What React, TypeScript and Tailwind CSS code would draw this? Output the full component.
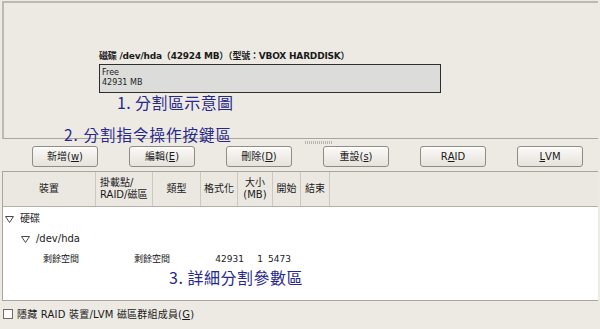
import React from 'react';

const uiFont = { fontFamily: '"DejaVu Sans", "Noto Sans CJK TC", sans-serif' };
const noteFont = { fontFamily: '"Noto Sans CJK TC", sans-serif' };

const Btn: React.FC<{ children: React.ReactNode }> = ({ children }) => (
    <div className="w-[66px] h-[21px] flex items-center justify-center rounded-[3px] border border-[#8f8b85] bg-gradient-to-b from-[#fbfaf8] to-[#e6e2dc] text-[10px] text-[#1a1a1a] shadow-[inset_0_1px_0_#ffffff]">
        {children}
    </div>
);

const Tri: React.FC = () => (
    <svg width="9" height="7" viewBox="0 0 9 7" className="shrink-0">
        <path d="M0.5 0.5 H8.5 L4.5 6.5 Z" fill="#ffffff" stroke="#4a4a4a" strokeWidth="1" />
    </svg>
);

const U: React.FC<{ children: React.ReactNode }> = ({ children }) => <span className="underline underline-offset-1">{children}</span>;

const App: React.FC = () => {
    return (
        <div className="w-[600px] h-[329px] bg-[#edeae4] relative overflow-hidden text-[#1a1a1a]" style={uiFont}>

            {/* Disk map panel */}
            <div className="mt-[1px] mx-[2px] h-[138px] border-t-2 border-l-2 border-b border-[#bdb9b2] border-b-[#a9a59e] pt-[46px] pl-[95px]">
                <p className="text-[9px] font-bold leading-[14px] tracking-[-0.2px]">磁碟 /dev/hda（42924 MB）（型號：VBOX HARDDISK）</p>
                <div className="mt-[1px] w-[342px] h-[29px] border border-[#2e2e2e] bg-[#dcdcdb] pl-[2px] pt-[3px] text-[8px] leading-[10px] text-[#222]">
                    <p>Free</p>
                    <p>42931 MB</p>
                </div>
                <p className="ml-[18px] mt-[0px] text-[16px] leading-[19px] tracking-[0.4px] text-[#28288a]" style={noteFont}>1. 分割區示意圖</p>
            </div>

            {/* Annotation over the panel edge */}
            <p className="absolute left-[64px] top-[125px] text-[15.5px] leading-[19px] tracking-[1px] text-[#28288a]" style={noteFont}>2. 分割指令操作按鍵區</p>

            {/* Pane handle */}
            <div className="h-[7px] flex justify-center pl-[38px]">
                <div className="w-[28px] h-[3px] mt-[2px] bg-[repeating-linear-gradient(90deg,#b8b4ad_0_1px,transparent_1px_2px)]"></div>
            </div>

            {/* Buttons */}
            <div className="flex gap-[31px] pl-[32px] h-[25px]">
                <Btn>新增(<U>w</U>)</Btn>
                <Btn>編輯(<U>E</U>)</Btn>
                <Btn>刪除(<U>D</U>)</Btn>
                <Btn>重設(<U>s</U>)</Btn>
                <Btn>R<U>A</U>ID</Btn>
                <Btn><U>L</U>VM</Btn>
            </div>

            {/* Partition table */}
            <div className="mx-[2px] h-[130px] border-t border-l border-b border-[#a9a59e] bg-white flex flex-col">
                <div className="h-[35px] flex bg-[#ebe8e2] border-b border-[#b5b1aa] text-[10px] leading-[12px]">
                    <div className="w-[93px] flex items-center justify-center border-r border-[#cdc9c2]">裝置</div>
                    <div className="w-[57px] flex flex-col justify-center pl-[4px] border-r border-[#cdc9c2]">
                        <span>掛載點/</span>
                        <span>RAID/磁區</span>
                    </div>
                    <div className="w-[48px] flex items-center justify-center border-r border-[#cdc9c2]">類型</div>
                    <div className="w-[37px] flex items-center justify-center border-r border-[#cdc9c2]">格式化</div>
                    <div className="w-[35px] flex flex-col items-center justify-center border-r border-[#cdc9c2]">
                        <span>大小</span>
                        <span>(MB)</span>
                    </div>
                    <div className="w-[28px] flex items-center justify-center border-r border-[#cdc9c2]">開始</div>
                    <div className="w-[29px] flex items-center justify-center border-r border-[#cdc9c2]">結束</div>
                    <div className="flex-1"></div>
                </div>
                <div className="flex-1 text-[10px] leading-[12px] pt-[2px]">
                    <div className="h-[20px] flex items-center gap-[6px] pl-[2px]"><Tri /><span>硬碟</span></div>
                    <div className="h-[20px] flex items-center gap-[6px] pl-[18px]"><Tri /><span>/dev/hda</span></div>
                    <div className="h-[20px] flex items-center text-[9px]">
                        <span className="w-[131px] pl-[40px]">剩餘空間</span>
                        <span className="w-[78px]">剩餘空間</span>
                        <span className="w-[32px] text-right">42931</span>
                        <span className="w-[19px] text-right">1</span>
                        <span className="pl-[5px]">5473</span>
                    </div>
                    <p className="pl-[166px] text-[16px] leading-[17px] tracking-[0.5px] text-[#28288a]" style={noteFont}>3. 詳細分割參數區</p>
                </div>
            </div>

            {/* Hide option */}
            <div className="h-[26px] flex items-center gap-[4px] pl-[3px] text-[10px] tracking-[0.2px]">
                <div className="w-[10px] h-[10px] border border-[#6f6b65] bg-white"></div>
                <span>隱藏 RAID 裝置/LVM 磁區群組成員(<U>G</U>)</span>
            </div>
        </div>
    );
};

export default App;
